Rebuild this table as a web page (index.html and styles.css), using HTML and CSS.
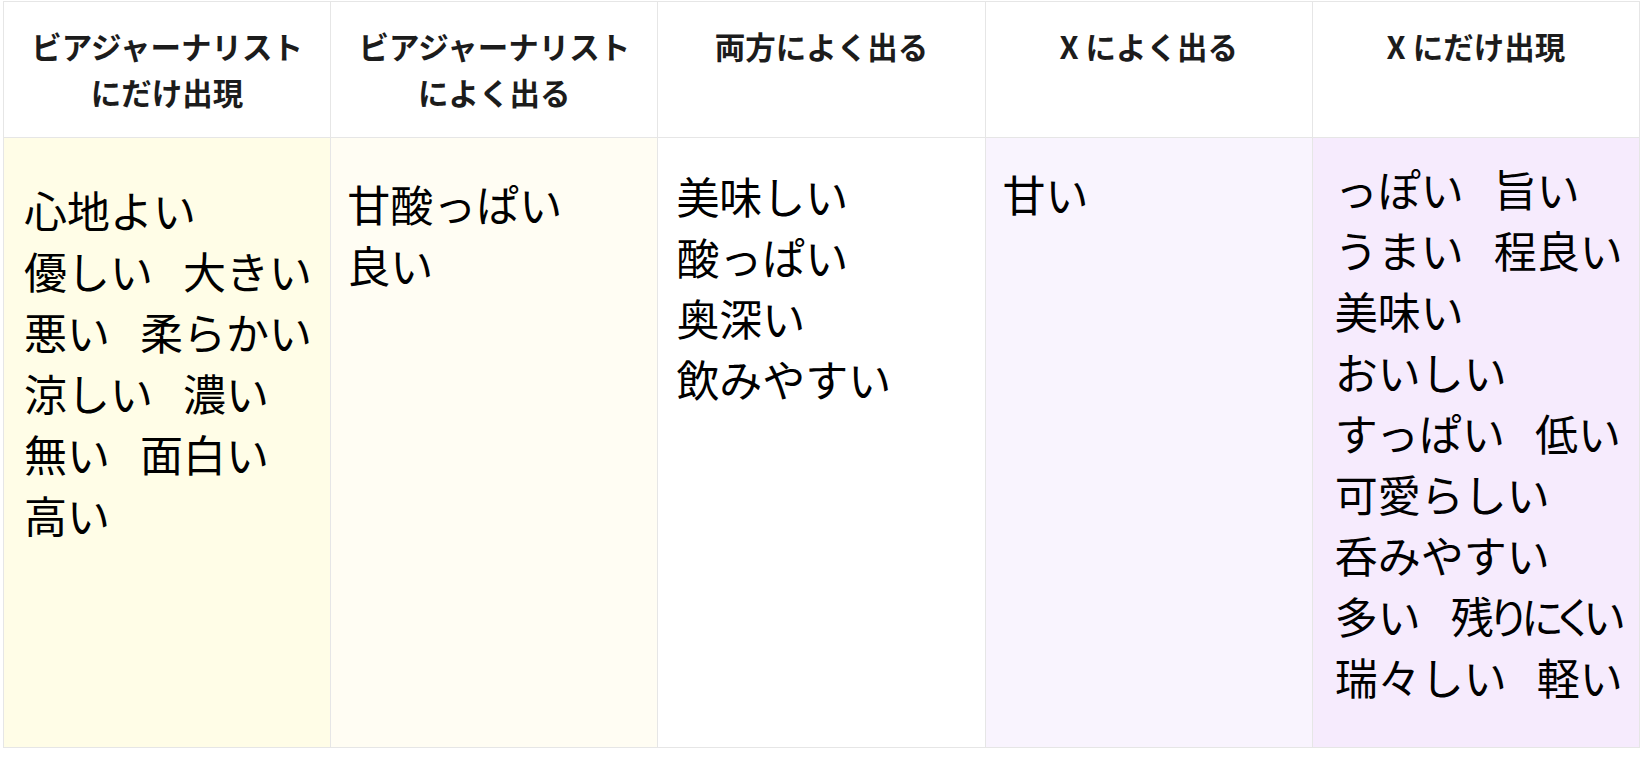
FILE: index.html
```html
<!DOCTYPE html>
<html lang="ja">
<head>
<meta charset="utf-8">
<title>ビアジャーナリストとXの語彙比較</title>
<link rel="stylesheet" href="styles.css">
</head>
<body>
<div class="page">
  <table class="compare">
    <thead>
      <tr>
        <th>ビアジャーナリスト<br>にだけ出現</th>
        <th>ビアジャーナリスト<br>によく出る</th>
        <th>両方によく出る</th>
        <th>X によく出る</th>
        <th>X にだけ出現</th>
      </tr>
    </thead>
    <tbody>
      <tr>
        <td class="c1">
          <div class="line"><span>心地よい</span></div>
          <div class="line"><span>優しい</span><span>大きい</span></div>
          <div class="line"><span>悪い</span><span>柔らかい</span></div>
          <div class="line"><span>涼しい</span><span>濃い</span></div>
          <div class="line"><span>無い</span><span>面白い</span></div>
          <div class="line"><span>高い</span></div>
        </td>
        <td class="c2">
          <div class="line"><span>甘酸っぱい</span></div>
          <div class="line"><span>良い</span></div>
        </td>
        <td class="c3">
          <div class="line"><span>美味しい</span></div>
          <div class="line"><span>酸っぱい</span></div>
          <div class="line"><span>奥深い</span></div>
          <div class="line"><span>飲みやすい</span></div>
        </td>
        <td class="c4">
          <div class="line"><span>甘い</span></div>
        </td>
        <td class="c5">
          <div class="line"><span>っぽい</span><span>旨い</span></div>
          <div class="line"><span>うまい</span><span>程良い</span></div>
          <div class="line"><span>美味い</span></div>
          <div class="line"><span>おいしい</span></div>
          <div class="line"><span>すっぱい</span><span>低い</span></div>
          <div class="line"><span>可愛らしい</span></div>
          <div class="line"><span>呑みやすい</span></div>
          <div class="line"><span>多い</span><span class="narrow">残りにくい</span></div>
          <div class="line"><span>瑞々しい</span><span>軽い</span></div>
        </td>
      </tr>
    </tbody>
  </table>
</div>
</body>
</html>
```

FILE: styles.css
```css
html, body {
  margin: 0;
  padding: 0;
  background: #ffffff;
}

.page {
  padding: 1px 0 0 3px;
}

.compare {
  border-collapse: collapse;
  table-layout: fixed;
  width: 1637px;
  font-family: "Noto Sans CJK JP", "Noto Sans", sans-serif;
}

.compare th,
.compare td {
  border: 1px solid #e6e6e6;
  vertical-align: top;
}

.compare thead tr {
  height: 136px;
}

.compare tbody tr {
  height: 610px;
}

.compare th {
  padding: 21px 8px 0;
  font-size: 30.5px;
  line-height: 46px;
  font-weight: 700;
  color: #1c1c1c;
  text-align: center;
  background: #ffffff;
}

.compare td {
  padding: 40px 4px 0 20px;
  font-size: 43px;
  line-height: 61px;
  color: #000000;
  text-align: left;
}

.line {
  display: flex;
  gap: 30px;
  white-space: nowrap;
}

.narrow {
  font-feature-settings: "palt";
  letter-spacing: -4px;
}

.compare .c1 { background: #fffde7; padding-top: 41px; padding-left: 20px; }
.compare .c2 { background: #fffdf3; padding-top: 35px; padding-left: 16px; }
.compare .c3 { background: #ffffff; padding-top: 27px; padding-left: 18px; }
.compare .c4 { background: #f9f4fe; padding-top: 25px; padding-left: 17px; }
.compare .c5 { background: #f6ebfd; padding-top: 20px; padding-left: 22px; }
```
